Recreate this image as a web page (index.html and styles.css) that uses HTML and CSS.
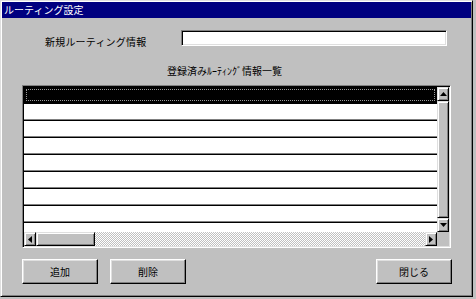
FILE: index.html
```html
<!DOCTYPE html>
<html lang="ja">
<head>
  <meta charset="UTF-8">
  <title>ルーティング設定</title>
  <link rel="stylesheet" href="styles.css">
</head>
<body>
  <div class="window">
    <div class="titlebar">ルーティング設定</div>

    <div class="client">
      <div class="field-row">
        <label class="field-label" for="route">新規ルーティング情報</label>
        <input class="field-input" id="route" type="text">
      </div>

      <div class="list-caption">登録済みﾙｰﾃｨﾝｸﾞ情報一覧</div>

      <div class="list">
        <div class="list-body">
          <div class="rows">
            <div class="row selected"></div>
            <div class="row"></div>
            <div class="row"></div>
            <div class="row"></div>
            <div class="row"></div>
            <div class="row"></div>
            <div class="row"></div>
            <div class="row"></div>
            <div class="row"></div>
          </div>
          <div class="vscroll">
            <div class="sb-btn">
              <svg width="7" height="4" viewBox="0 0 7 4"><polygon points="3.5,0 7,4 0,4" fill="#000"/></svg>
            </div>
            <div class="sb-thumb"></div>
            <div class="sb-btn">
              <svg width="7" height="4" viewBox="0 0 7 4"><polygon points="0,0 7,0 3.5,4" fill="#000"/></svg>
            </div>
          </div>
        </div>
        <div class="hscroll">
          <div class="sb-btn">
            <svg width="4" height="7" viewBox="0 0 4 7"><polygon points="4,0 4,7 0,3.5" fill="#000"/></svg>
          </div>
          <div class="sb-thumb h"></div>
          <div class="sb-track"></div>
          <div class="sb-btn">
            <svg width="4" height="7" viewBox="0 0 4 7"><polygon points="0,0 4,3.5 0,7" fill="#000"/></svg>
          </div>
          <div class="sb-corner"></div>
        </div>
      </div>

      <div class="buttons">
        <button class="btn">追加</button>
        <button class="btn">削除</button>
        <button class="btn right">閉じる</button>
      </div>
    </div>
  </div>
</body>
</html>
```

FILE: styles.css
```css
body {
  margin: 0;
  width: 476px;
  height: 299px;
  overflow: hidden;
  background: #c0c0c0;
  font-family: "Noto Sans CJK JP", "DejaVu Sans", sans-serif;
  font-size: 10px;
  color: #000;
}
.window {
  box-sizing: border-box;
  width: 473px;
  height: 297px;
  padding: 1px;
  border: 1px solid;
  border-color: #dfdfdf #000 #000 #dfdfdf;
  box-shadow: inset 1px 1px #fff, inset -1px -1px #808080;
  background: #c0c0c0;
}
.titlebar {
  height: 16px;
  line-height: 16px;
  padding-left: 2px;
  background: #000080;
  color: #fff;
}
.client {
  display: flex;
  flex-direction: column;
}
.field-row {
  display: flex;
  align-items: flex-start;
  margin-top: 12px;
}
.field-label {
  width: 136px;
  margin-left: 43px;
  margin-top: 6px;
  line-height: 12px;
  letter-spacing: 0.2px;
}
.field-input {
  box-sizing: border-box;
  width: 266px;
  height: 16px;
  margin: 0;
  padding: 0 2px;
  border: 1px solid;
  border-color: #808080 #fff #fff #808080;
  box-shadow: inset 1px 1px #000, inset -1px -1px #dfdfdf;
  background: #fff;
  outline: none;
}
.list-caption {
  margin-top: 17px;
  margin-left: 165px;
  line-height: 12px;
}
.list {
  box-sizing: border-box;
  width: 429px;
  height: 163px;
  margin-top: 8px;
  margin-left: 20px;
  border: 1px solid;
  border-color: #808080 #fff #fff #808080;
  box-shadow: inset 1px 1px #000, inset -1px -1px #dfdfdf;
  padding: 1px;
  display: flex;
  flex-direction: column;
}
.list-body {
  display: flex;
  height: 145px;
}
.rows {
  flex: 1;
  overflow: hidden;
  background: #fff;
}
.row {
  box-sizing: border-box;
  height: 17px;
  border-bottom: 1px solid #000;
  box-shadow: inset 0 -1px #808080;
  background: #fff;
}
.row.selected {
  position: relative;
  background: #000;
  box-shadow: none;
}
.row.selected::after {
  content: "";
  position: absolute;
  left: 2px;
  right: 2px;
  top: 2px;
  bottom: 2px;
  border: 1px dotted #9a9a9a;
}
.vscroll {
  width: 12px;
  display: flex;
  flex-direction: column;
}
.sb-btn {
  box-sizing: border-box;
  width: 12px;
  height: 14px;
  flex-shrink: 0;
  border: 1px solid;
  border-color: #dfdfdf #000 #000 #dfdfdf;
  box-shadow: inset 1px 1px #fff, inset -1px -1px #808080;
  background: #c0c0c0;
  display: flex;
  align-items: center;
  justify-content: center;
}
.sb-thumb {
  flex: 1;
  box-sizing: border-box;
  border: 1px solid;
  border-color: #dfdfdf #000 #000 #dfdfdf;
  box-shadow: inset 1px 1px #fff, inset -1px -1px #808080;
  background: #c0c0c0;
}
.sb-thumb.h {
  flex: none;
  width: 59px;
}
.hscroll {
  display: flex;
  height: 14px;
}
.sb-track {
  flex: 1;
  background: repeating-conic-gradient(#fff 0 25%, #c0c0c0 0 50%) 0 0 / 2px 2px;
}
.sb-corner {
  width: 12px;
  background: #c0c0c0;
}
.buttons {
  display: flex;
  gap: 12px;
  margin-top: 11px;
  margin-left: 20px;
}
.btn {
  box-sizing: border-box;
  width: 76px;
  height: 25px;
  padding: 0;
  border: 1px solid;
  border-color: #fff #000 #000 #fff;
  box-shadow: inset -1px -1px #808080, inset 1px 1px #dfdfdf;
  background: #c0c0c0;
  font-family: inherit;
  font-size: 10px;
  color: #000;
}
.btn.right {
  margin-left: auto;
  margin-right: 19px;
}
```
